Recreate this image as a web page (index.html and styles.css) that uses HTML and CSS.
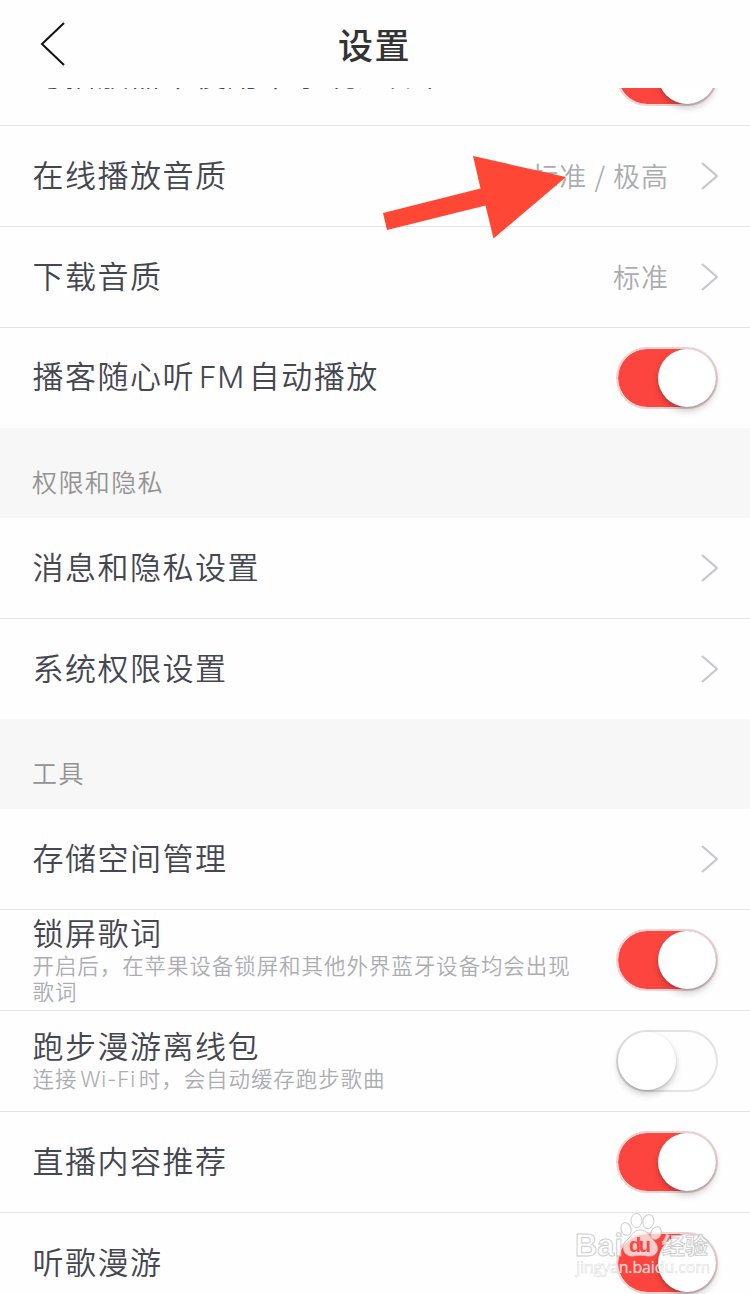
FILE: index.html
```html
<!DOCTYPE html>
<html lang="zh-CN">
<head>
<meta charset="utf-8">
<title>设置</title>
<link rel="stylesheet" href="styles.css">
</head>
<body>
<svg class="defs" width="0" height="0">
  <symbol id="chevron" viewBox="0 0 18 28"><path d="M2 1L17 14L2 27" fill="none" stroke="#c6c7cb" stroke-width="2.200"/></symbol>
</svg>
<div class="screen">
  <header class="bar">
    <svg class="back" width="26" height="46" viewBox="0 0 26 46"><path d="M24 2L2 23L24 44" fill="none" stroke="#111" stroke-width="2"/></svg>
    <h1 class="title">设置</h1>
  </header>
  <main class="list">
    <div class="row clipped"><div class="label">与播放器中使用本系统通知栏</div><div class="switch on"></div></div>
    <div class="row"><div class="label">在线播放音质</div><div class="value">标准 / 极高</div><svg class="chev"><use href="#chevron"/></svg></div>
    <div class="row"><div class="label">下载音质</div><div class="value">标准</div><svg class="chev"><use href="#chevron"/></svg></div>
    <div class="row last"><div class="label">播客随心听<span class="latin fm">FM</span>自动播放</div><div class="switch on"></div></div>
    <h2 class="section">权限和隐私</h2>
    <div class="row"><div class="label">消息和隐私设置</div><svg class="chev"><use href="#chevron"/></svg></div>
    <div class="row last"><div class="label">系统权限设置</div><svg class="chev"><use href="#chevron"/></svg></div>
    <h2 class="section">工具</h2>
    <div class="row"><div class="label">存储空间管理</div><svg class="chev"><use href="#chevron"/></svg></div>
    <div class="row"><div class="stack"><div class="label">锁屏歌词</div><p class="note">开启后，在苹果设备锁屏和其他外界蓝牙设备均会出现<br>歌词</p></div><div class="switch on"></div></div>
    <div class="row"><div class="stack"><div class="label">跑步漫游离线包</div><p class="note">连接<span class="latin wifi">Wi-Fi</span>时，会自动缓存跑步歌曲</p></div><div class="switch"></div></div>
    <div class="row"><div class="label">直播内容推荐</div><div class="switch on"></div></div>
    <div class="row"><div class="label">听歌漫游</div><div class="switch on"></div></div>
  </main>
  <svg class="arrow" width="184" height="84" viewBox="383 155 184 84"><path d="M383 213L480.500 188.500L473 156L566 177L493.500 238.500L485.500 205.500L387 230Z" fill="#ff4736"/></svg>
  <svg class="watermark" width="144" height="70" viewBox="572 1210 144 70">
    <g fill="#fff" fill-opacity=".72" stroke="#c4c4c4" stroke-opacity=".85" stroke-width="1">
      <text class="wm-logo" x="575" y="1256" textLength="48" lengthAdjust="spacingAndGlyphs">Bai</text>
      <ellipse cx="626" cy="1229" rx="5" ry="6.500" transform="rotate(-20 626 1229)"/>
      <ellipse cx="636.500" cy="1220.500" rx="5.500" ry="7"/>
      <ellipse cx="648.500" cy="1221.500" rx="5.500" ry="7" transform="rotate(12 648 1221)"/>
      <ellipse cx="656" cy="1233" rx="5" ry="6.500" transform="rotate(24 656 1233)"/>
      <path d="M640 1230C633 1230 632 1236 627 1240C620 1246 624 1257 633 1256C638 1255 643 1255 648 1256C658 1257 660 1247 654 1241C649 1236 648 1230 640 1230Z"/>
      <text class="wm-cn" x="662" y="1254" textLength="46">经验</text>
    </g>
    <text class="wm-du" x="629" y="1252" textLength="22">du</text>
    <text class="wm-url" x="576" y="1273" textLength="134">jingyan.baidu.com</text>
  </svg>
</div>
</body>
</html>
```
FILE: styles.css
```css
* { box-sizing: border-box; }
body { margin: 0; background: #fff; font-family: "Noto Sans CJK SC", sans-serif; }
.defs { position: absolute; }
.screen { position: relative; width: 750px; height: 1294px; overflow: hidden; background: #fefefe; }
.bar { display: grid; grid-template-columns: 100px 1fr 100px; align-items: center; height: 88px; background: #fefefe; }
.back { margin-left: 40px; }
.title { margin: 0 1px 1px 0; text-align: center; font-size: 35px; line-height: 50px; letter-spacing: 1.500px; font-weight: 500; color: #333; }
.list { height: 1206px; overflow: hidden; }
.row { display: flex; align-items: center; height: 101px; padding: 0 32px; border-bottom: 1px solid #e3e4e6; }
.row.clipped { margin-top: -63px; }
.row.last { border-bottom-color: #f9f9f9; }
.label { flex: 1; margin-bottom: 4px; padding-left: 0.500px; font-size: 31px; line-height: 40px; letter-spacing: 1.500px; font-weight: 350; color: #454750; white-space: nowrap; }
.stack { flex: 1; }
.stack .label { margin: -4px 0 1px; line-height: 38px; }
.note { margin: 0; padding-left: 0.500px; font-size: 21.500px; line-height: 26px; letter-spacing: .920px; font-weight: 350; color: #acadb2; white-space: nowrap; }
.latin { font-family: Inter, sans-serif; font-weight: 300; }
.fm { margin: 0 4px; font-size: 30px; letter-spacing: .5px; }
.wifi { margin: 0 3px; font-size: 21px; letter-spacing: .7px; }
.value { margin: 0 31px 1px 0; font-size: 27px; line-height: 40px; letter-spacing: 1px; font-weight: 350; color: #abacb1; }
.chev { width: 18px; height: 28px; }
.section { margin: 0; height: 89px; padding: 32px 32px 0; background: #f7f7f7; font-size: 25px; line-height: 40px; letter-spacing: 1.400px; font-weight: 350; color: #939393; }
.switch { width: 102px; height: 62px; border: 2px solid #e3e3e3; border-radius: 31px; background: #fefefe; display: flex; }
.switch::before { content: ""; width: 58px; height: 58px; border-radius: 50%; background: #fff; box-shadow: 0 4px 7px rgba(0,0,0,.2), 0 1px 2px rgba(0,0,0,.15); }
.switch.on { justify-content: flex-end; background: #fd453f; border-color: #edd4d4; background-clip: padding-box; }
.arrow { position: absolute; left: 383px; top: 155px; }
.watermark { position: absolute; left: 572px; top: 1210px; }
.wm-logo { font: 700 32px "Liberation Sans", sans-serif; }
.wm-cn { font: 700 23px "Noto Sans CJK SC", sans-serif; }
.wm-du { font: 700 20px "Liberation Sans", sans-serif; fill: #f04b45; }
.wm-url { font: 400 16px "Open Sans", sans-serif; fill: #fff; fill-opacity: .8; stroke: #c8c8c8; stroke-opacity: .7; stroke-width: .5px; }
```
